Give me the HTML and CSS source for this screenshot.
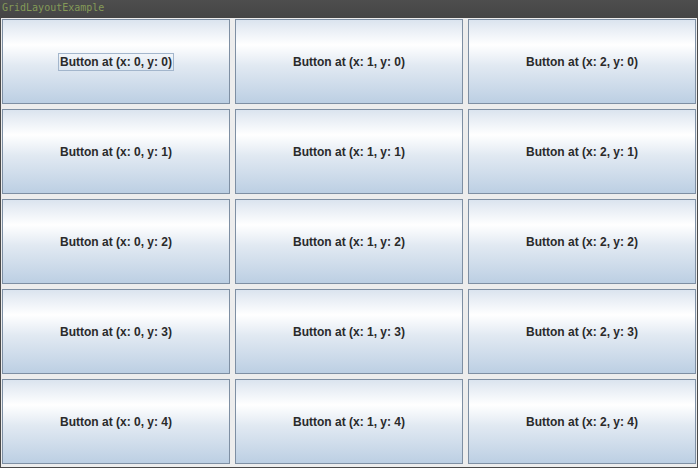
FILE: index.html
```html
<!DOCTYPE html>
<html>
<head>
<meta charset="utf-8">
<link rel="stylesheet" href="styles.css">
</head>
<body>
<div class="window">
  <div class="titlebar">GridLayoutExample</div>
  <div class="content">
    <div class="grid">
      <button class="btn"><span class="focus">Button at (x: 0, y: 0)</span></button>
      <button class="btn"><span>Button at (x: 1, y: 0)</span></button>
      <button class="btn"><span>Button at (x: 2, y: 0)</span></button>
      <button class="btn"><span>Button at (x: 0, y: 1)</span></button>
      <button class="btn"><span>Button at (x: 1, y: 1)</span></button>
      <button class="btn"><span>Button at (x: 2, y: 1)</span></button>
      <button class="btn"><span>Button at (x: 0, y: 2)</span></button>
      <button class="btn"><span>Button at (x: 1, y: 2)</span></button>
      <button class="btn"><span>Button at (x: 2, y: 2)</span></button>
      <button class="btn"><span>Button at (x: 0, y: 3)</span></button>
      <button class="btn"><span>Button at (x: 1, y: 3)</span></button>
      <button class="btn"><span>Button at (x: 2, y: 3)</span></button>
      <button class="btn"><span>Button at (x: 0, y: 4)</span></button>
      <button class="btn"><span>Button at (x: 1, y: 4)</span></button>
      <button class="btn"><span>Button at (x: 2, y: 4)</span></button>
    </div>
  </div>
</div>
</body>
</html>
```
FILE: styles.css
```css
html, body {
  margin: 0;
  padding: 0;
  width: 698px;
  height: 468px;
  overflow: hidden;
  background: #4a4a4a;
}
.window {
  width: 698px;
  height: 468px;
  display: flex;
  flex-direction: column;
  background: #4a4a4a;
}
.titlebar {
  height: 18px;
  flex: none;
  box-sizing: border-box;
  padding: 1px 0 0 2px;
  font-family: "DejaVu Sans Mono", monospace;
  font-size: 10px;
  line-height: 14px;
  color: #849a58;
  background: linear-gradient(#4e4e4e, #454545);
}
.content {
  margin: 0 1px 1px 1px;
  flex: 1;
  background: #ededed;
  padding: 1px 1px 3px 1px;
}
.grid {
  display: grid;
  grid-template-columns: 228px 228px 228px;
  grid-template-rows: repeat(5, 85px);
  gap: 5px;
}
.btn {
  margin: 0;
  padding: 1px 0 0 0;
  border: 1px solid #7e8fa3;
  background: linear-gradient(#dbe4ef 0%, #ffffff 30%, #e1e9f2 55%, #bccfe3 100%);
  display: flex;
  align-items: center;
  justify-content: center;
  font-family: "Liberation Sans", Arial, sans-serif;
  font-weight: bold;
  font-size: 12px;
  color: #2a2a2a;
}
.btn span {
  display: block;
  line-height: 14px;
  padding: 1px 1px;
  border: 1px solid transparent;
}
.btn .focus {
  border-color: #a3b6cc;
}
```
